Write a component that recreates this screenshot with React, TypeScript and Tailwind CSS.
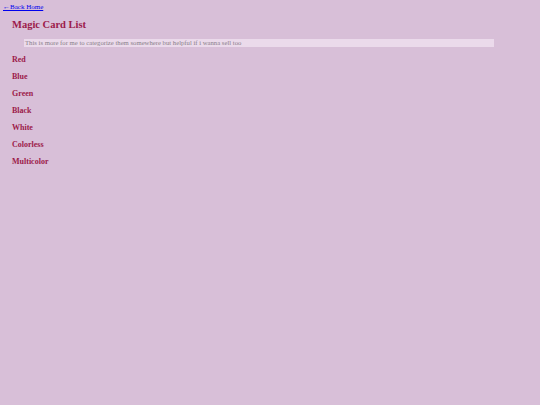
export default function App() {
  const colors = ["Red", "Blue", "Green", "Black", "White", "Colorless", "Multicolor"];
  return (
    <div className="min-h-[405px] bg-[#d8bfd8] font-['Liberation_Serif',serif] pt-[3px]">
      <a href="#" className="block ml-[3px] text-[7px] leading-[8px] text-[#0000ee] underline">
        ←Back Home
      </a>
      <div className="pl-[12px]">
        <h1 className="mt-[8px] text-[10.5px] leading-[12px] font-bold text-[#9c1a4a]">Magic Card List</h1>
        <div className="mt-[8px] ml-[12px] w-[470px] h-[8px] bg-[#ebdaeb] text-[6.7px] leading-[8px] text-[#8a7f8a] pl-[1px]">
          This is more for me to categorize them somewhere but helpful if i wanna sell too
        </div>
        <div className="mt-[8px] flex flex-col gap-[8px]">
          {colors.map((c) => (
            <div key={c} className="text-[8px] leading-[9px] font-bold text-[#9c1a4a]">
              {c}
            </div>
          ))}
        </div>
      </div>
    </div>
  );
}
